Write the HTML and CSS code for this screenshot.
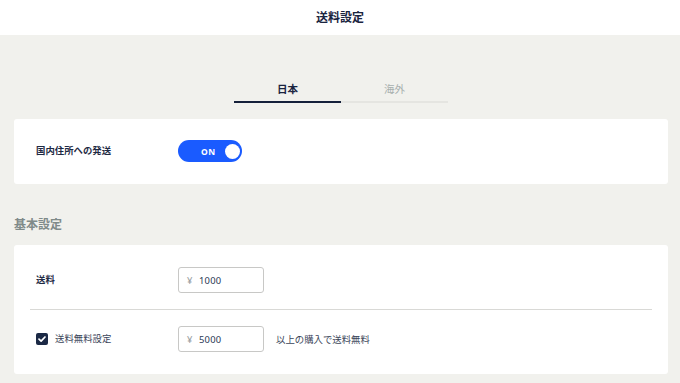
FILE: index.html
```html
<!DOCTYPE html>
<html lang="ja">
<head>
<meta charset="utf-8">
<link rel="stylesheet" href="styles.css">
</head>
<body>
<header class="topbar"><h1 class="title">送料設定</h1></header>
<main class="page">
  <nav class="tabs">
    <div class="tab tab-active">日本</div>
    <div class="tab">海外</div>
  </nav>
  <section class="card card-toggle">
    <div class="row-simple">
      <div class="label strong">国内住所への発送</div>
      <div class="toggle"><span class="toggle-text">ON</span><span class="knob"></span></div>
    </div>
  </section>
  <h2 class="section-title">基本設定</h2>
  <section class="card card-list">
    <div class="row row-divided">
      <div class="label strong">送料</div>
      <div class="input"><span class="yen">¥</span><span class="val">1000</span></div>
    </div>
    <div class="row">
      <div class="label check-label">
        <span class="checkbox"><svg viewBox="0 0 12 12" width="12" height="12"><path d="M3 6.2 L5.1 8.2 L9 4" fill="none" stroke="#fff" stroke-width="1.7" stroke-linecap="round" stroke-linejoin="round"/></svg></span>
        <span>送料無料設定</span>
      </div>
      <div class="input"><span class="yen">¥</span><span class="val">5000</span></div>
      <div class="note">以上の購入で送料無料</div>
    </div>
  </section>
</main>
</body>
</html>
```

FILE: styles.css
```css
* { box-sizing: border-box; }
html, body { margin: 0; padding: 0; }
body {
  width: 680px;
  height: 383px;
  overflow: hidden;
  background: #f1f1ed;
  font-family: "Noto Sans", "Noto Sans CJK JP", sans-serif;
  color: #1e2a44;
}
.topbar {
  height: 35px;
  background: #fff;
  display: flex;
  align-items: center;
  justify-content: center;
}
.title {
  margin: 0;
  font-size: 12px;
  font-weight: 700;
  line-height: 16px;
  color: #1a2440;
}
.page {
  padding: 0 12px 0 14px;
}
.tabs {
  margin-top: 41px;
  display: flex;
  justify-content: center;
}
.tab {
  width: 107px;
  text-align: center;
  font-size: 10.5px;
  line-height: 12px;
  padding: 7px 0 6px;
  color: #a7afae;
  border-bottom: 2px solid #e5e5e1;
}
.tab-active {
  color: #1a2440;
  font-weight: 700;
  border-bottom-color: #15203a;
}
.card {
  background: #fff;
  border-radius: 3px;
}
.card-toggle {
  margin-top: 16px;
  padding: 21px 22px 22px;
}
.row-simple, .row {
  display: flex;
  align-items: center;
}
.label {
  width: 142px;
  flex: none;
  font-size: 9.4px;
  line-height: 12px;
}
.strong { font-weight: 700; }
.toggle {
  width: 64px;
  height: 22px;
  border-radius: 11px;
  background: #1a5bff;
  display: flex;
  align-items: center;
  padding: 0 2px 0 23px;
}
.toggle-text {
  color: #fff;
  font-size: 8.5px;
  font-weight: 700;
  letter-spacing: 0.6px;
}
.knob {
  margin-left: auto;
  width: 15px;
  height: 15px;
  border-radius: 50%;
  background: #fff;
}
.section-title {
  margin: 33px 0 12px;
  font-size: 12px;
  line-height: 16px;
  font-weight: 700;
  color: #7f8a89;
}
.card-list {
  padding: 6px 16px;
}
.row {
  padding: 16px 6px;
}
.row-divided {
  border-bottom: 1px solid #d9d9d6;
}
.input {
  width: 86px;
  height: 26px;
  border: 1px solid #c8c8c6;
  border-radius: 3px;
  display: flex;
  align-items: center;
  padding-left: 8px;
  font-size: 9.4px;
  background: #fff;
}
.yen {
  color: #9aa0a3;
  width: 12px;
}
.val {
  color: #2b3955;
  letter-spacing: 0.2px;
}
.check-label {
  display: flex;
  align-items: center;
  gap: 7px;
  font-weight: 400;
  color: #3a4559;
}
.checkbox {
  width: 12px;
  height: 12px;
  border-radius: 2px;
  background: #1b2945;
  display: flex;
}
.note {
  margin-left: 12px;
  font-size: 9.4px;
  color: #3a4559;
}
```
